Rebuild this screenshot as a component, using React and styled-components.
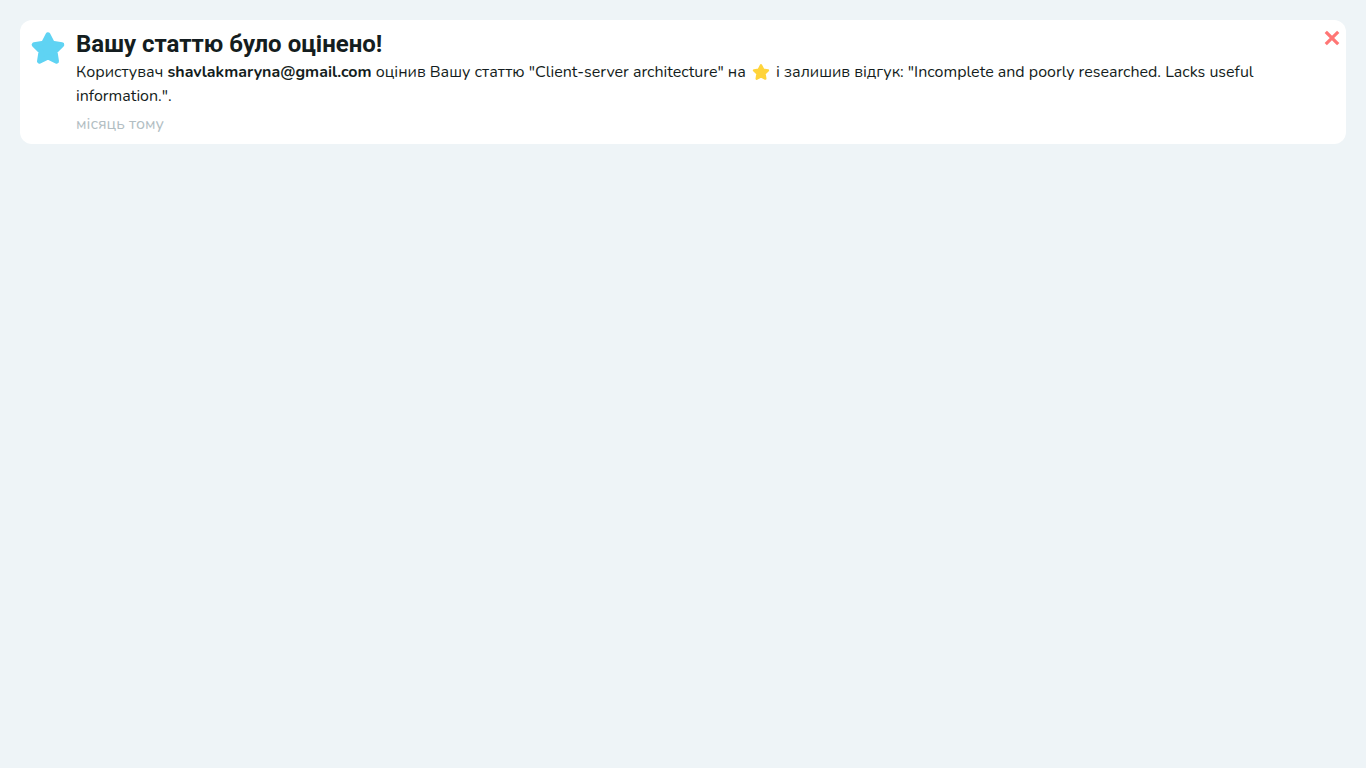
import React from "react";
import styled, { createGlobalStyle } from "styled-components";

const GlobalStyle = createGlobalStyle`
  * {
    box-sizing: border-box;
  }
  body {
    margin: 0;
    background: #eef4f7;
    color: #141d20;
    font-family: Nunito, "Open Sans", "Noto Sans", sans-serif;
    font-size: 16px;
    line-height: 24px;
  }
`;

const Page = styled.main`
  padding: 20px;
`;

const Card = styled.article`
  display: flex;
  align-items: flex-start;
  gap: 10px;
  padding: 10px 4px 8px 10px;
  border-radius: 12px;
  background: #ffffff;
`;

const StarShape = (props) => (
  <svg viewBox="0 0 36 36" aria-hidden="true" {...props}>
    <path
      d="M18 4.7 22.4 13.2 31.9 14.7 25.1 21.5 26.6 31.3 18 27 9.4 31.3 10.9 21.5 4.1 14.7 13.6 13.2Z"
      fill="currentColor"
      stroke="currentColor"
      strokeWidth="4.8"
      strokeLinejoin="round"
    />
  </svg>
);

const CardIcon = styled(StarShape)`
  flex: none;
  width: 36px;
  height: 36px;
  color: #5fd3f3;
`;

const Content = styled.div`
  flex: 1;
  min-width: 0;
`;

const Title = styled.h1`
  margin: 0 0 2px;
  font-family: Roboto, sans-serif;
  font-size: 24px;
  line-height: 28px;
  font-weight: 700;
`;

const Message = styled.p`
  margin: 0 0 4px;
`;

const Rating = styled(StarShape)`
  width: 18px;
  height: 18px;
  margin: 0 2px;
  color: #ffd43b;
  vertical-align: -4px;
`;

const Time = styled.time`
  display: block;
  color: #b2bec3;
`;

const CloseButton = styled.button`
  display: flex;
  flex: none;
  margin-top: -2px;
  padding: 0;
  border: 0;
  background: none;
  color: #ff7675;
  cursor: pointer;
`;

const CloseIcon = styled.svg`
  width: 20px;
  height: 20px;
`;

export default function App() {
  return (
    <>
      <GlobalStyle />
      <Page>
        <Card>
          <CardIcon />
          <Content>
            <Title>Вашу статтю було оцінено!</Title>
            <Message>
              Користувач <strong>shavlakmaryna@gmail.com</strong> оцінив Вашу
              статтю "Client-server architecture" на <Rating /> і залишив
              відгук: "Incomplete and poorly researched. Lacks useful
              information.".
            </Message>
            <Time>місяць тому</Time>
          </Content>
          <CloseButton type="button" aria-label="Закрити">
            <CloseIcon viewBox="0 0 20 20" aria-hidden="true">
              <path
                d="M4.9 4.9 15.1 15.1M15.1 4.9 4.9 15.1"
                fill="none"
                stroke="currentColor"
                strokeWidth="3.2"
                strokeLinecap="square"
              />
            </CloseIcon>
          </CloseButton>
        </Card>
      </Page>
    </>
  );
}
